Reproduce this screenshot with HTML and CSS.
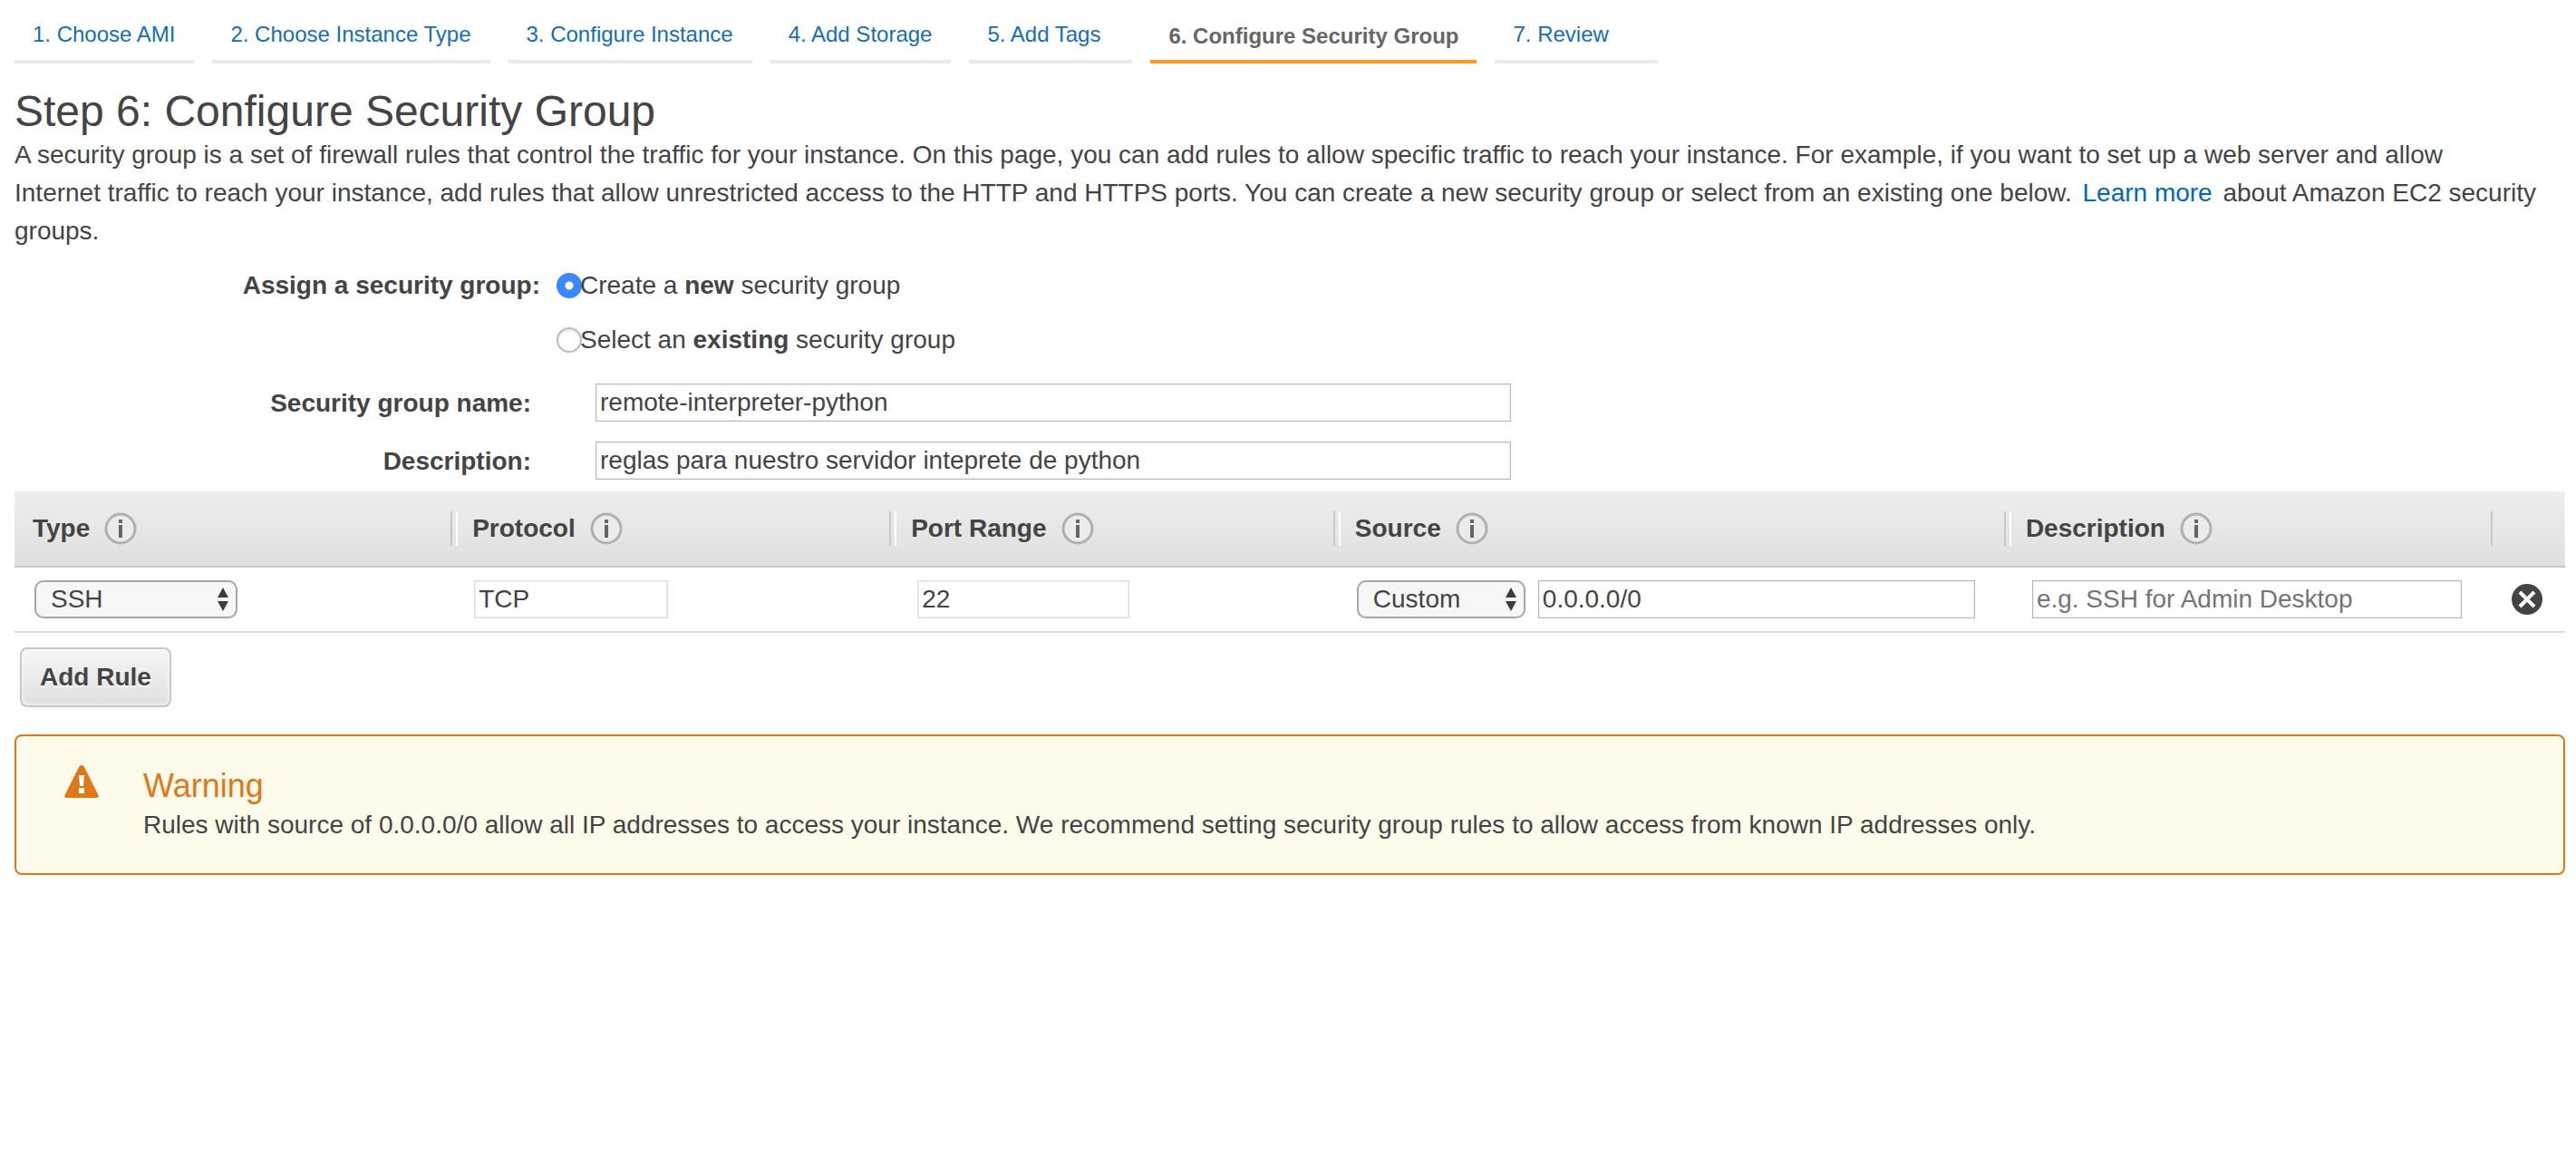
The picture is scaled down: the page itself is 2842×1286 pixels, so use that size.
FILE: index.html
```html
<!DOCTYPE html>
<html lang="en">
<head>
<meta charset="utf-8">
<title>Step 6: Configure Security Group</title>
<link rel="stylesheet" href="styles.css">
</head>
<body>
<svg class="sprite" aria-hidden="true">
  <symbol id="info" viewBox="0 0 36 36">
    <circle cx="18" cy="18" r="16" fill="#ebebeb" stroke="#b0b0b0" stroke-width="3"/>
    <path d="M18 8v4M18 14v14" stroke="#666" stroke-width="4"/>
  </symbol>
  <symbol id="arrows" viewBox="0 0 14 26">
    <path d="M7 0l6 11H1zM7 26l6-11H1z" fill="#3c3c3c"/>
  </symbol>
</svg>
<nav class="steps" aria-label="Wizard steps">
  <a class="step" href="#ami">1. Choose AMI</a>
  <a class="step" href="#type">2. Choose Instance Type</a>
  <a class="step" href="#instance">3. Configure Instance</a>
  <a class="step" href="#storage">4. Add Storage</a>
  <a class="step" href="#tags">5. Add Tags</a>
  <a class="step step-active" href="#security" aria-current="step">6. Configure Security Group</a>
  <a class="step" href="#review">7. Review</a>
</nav>
<main>
  <h1 class="title">Step 6: Configure Security Group</h1>
  <p class="intro">A security group is a set of firewall rules that control the traffic for your instance. On this page, you can add rules to allow specific traffic to reach your instance. For example, if you want to set up a web server and allow<br>Internet traffic to reach your instance, add rules that allow unrestricted access to the HTTP and HTTPS ports. You can create a new security group or select from an existing one below. <a class="learn" href="#learn">Learn more</a> about Amazon EC2 security<br>groups.</p>
  <form class="form">
    <div class="assign" role="radiogroup" aria-labelledby="assign-label">
      <span class="assign-label" id="assign-label">Assign a security group:</span>
      <div class="options">
        <label class="option"><input class="radio" type="radio" name="group" checked><span>Create a <b>new</b> security group</span></label>
        <label class="option"><input class="radio" type="radio" name="group"><span>Select an <b>existing</b> security group</span></label>
      </div>
    </div>
    <div class="field">
      <label class="field-label" for="name">Security group name:</label>
      <input class="text-input field-input" id="name" type="text" value="remote-interpreter-python">
    </div>
    <div class="field">
      <label class="field-label" for="desc">Description:</label>
      <input class="text-input field-input" id="desc" type="text" value="reglas para nuestro servidor inteprete de python">
    </div>
    <table class="rules">
      <colgroup><col class="col-type"><col class="col-protocol"><col class="col-port"><col class="col-source"><col class="col-desc"><col></colgroup>
      <thead>
        <tr>
          <th scope="col"><div class="head">Type <svg class="info"><use href="#info"/></svg></div></th>
          <th scope="col"><div class="head divided">Protocol <svg class="info"><use href="#info"/></svg></div></th>
          <th scope="col"><div class="head divided">Port Range <svg class="info"><use href="#info"/></svg></div></th>
          <th scope="col"><div class="head divided">Source <svg class="info"><use href="#info"/></svg></div></th>
          <th scope="col"><div class="head divided">Description <svg class="info"><use href="#info"/></svg></div></th>
          <td><div class="head divided divided-last"></div></td>
        </tr>
      </thead>
      <tbody>
        <tr>
          <td><div class="cell cell-first"><div class="select-wrap type-select"><select class="select" aria-label="Type"><option>SSH</option></select><svg class="arrows"><use href="#arrows"/></svg></div></div></td>
          <td><div class="cell"><input class="text-input fixed protocol" type="text" aria-label="Protocol" value="TCP" readonly></div></td>
          <td><div class="cell cell-inset"><input class="text-input fixed port" type="text" aria-label="Port range" value="22" readonly></div></td>
          <td><div class="cell"><div class="select-wrap source-select"><select class="select" aria-label="Source"><option>Custom</option></select><svg class="arrows"><use href="#arrows"/></svg></div><input class="text-input grow" type="text" aria-label="Source address" value="0.0.0.0/0"></div></td>
          <td><div class="cell cell-inset"><input class="text-input grow" type="text" aria-label="Rule description" placeholder="e.g. SSH for Admin Desktop"></div></td>
          <td><div class="cell cell-first"><button class="remove" type="button" aria-label="Remove rule"><svg class="remove-icon" viewBox="0 0 36 36"><circle cx="18" cy="18" r="17" fill="#444"/><path d="M10 10l16 16M26 10L10 26" stroke="#fff" stroke-width="4"/></svg></button></div></td>
        </tr>
      </tbody>
    </table>
    <button class="add" type="button">Add Rule</button>
  </form>
  <section class="warning">
    <svg class="warning-icon" viewBox="0 0 38 36"><path d="M19 0q2 0 3 2l15 30q2 4-2 4H3q-4 0-2-4L16 2q1-2 3-2z" fill="#e07719"/><path d="M16 11h6l-1 12h-4zM16 25h6v6h-6z" fill="#fff"/></svg>
    <div>
      <h2 class="warning-title">Warning</h2>
      <p class="warning-text">Rules with source of 0.0.0.0/0 allow all IP addresses to access your instance. We recommend setting security group rules to allow access from known IP addresses only.</p>
    </div>
  </section>
</main>
</body>
</html>
```
FILE: styles.css
```css
* { box-sizing: border-box; }

body {
  margin: 0;
  padding: 0 12px 40px 16px;
  background: #fff;
  color: #444;
  font: 28px/42px "Liberation Sans", Arial, sans-serif;
}

a { text-decoration: none; }
h1, h2, p { margin: 0; font-weight: 400; }
input, select, button { margin: 0; color: inherit; font: inherit; }

.sprite { position: absolute; width: 0; height: 0; }

.steps { display: flex; flex-wrap: wrap; gap: 20px; }
.step {
  min-width: 180px;
  height: 70px;
  padding: 23px 21px 0 20px;
  border-bottom: 4px solid #eaeaea;
  color: #146eb4;
  font-size: 24px;
  line-height: 30px;
}
.step-active {
  padding: 25px 20px 0;
  border-color: #ff9927;
  color: #666;
  font-weight: 700;
}

.title { padding-top: 26px; font-size: 48px; line-height: 54px; }
.learn { margin: 0 4px; color: #0066c0; }

.form { padding-top: 18px; }
.assign { display: flex; gap: 18px; }
.assign-label, .field-label { font-weight: 700; text-align: right; }
.assign-label { width: 580px; }
.options { display: flex; flex-direction: column; gap: 18px; }
.option { display: flex; align-items: center; }
.radio {
  appearance: none;
  width: 28px;
  height: 28px;
  margin-right: -2px;
  border: 2px solid #bbb;
  border-radius: 50%;
  background: #fff;
  box-shadow: inset 0 2px 2px #e4e4e4;
}
.radio:checked {
  border-color: #3b88fd;
  background: radial-gradient(circle, #fff 4px, #3b88fd 5px);
  box-shadow: none;
}

.field { display: flex; gap: 71px; height: 42px; margin-top: 22px; }
.assign + .field { margin-top: 27px; }
.field-label { width: 570px; line-height: 44px; }
.text-input {
  height: 42px;
  padding: 0 4px;
  border: 1px solid #b8b8b8;
  border-radius: 0;
  background: #fff;
  box-shadow: inset 0 0 0 1px #eee;
  line-height: 40px;
}
.text-input::placeholder { color: #757575; opacity: 1; }
.field-input { width: 1010px; }

.rules {
  width: 100%;
  margin-top: 13px;
  border-collapse: collapse;
  table-layout: fixed;
}
.rules th, .rules td { padding: 0; text-align: left; }
.rules thead { background: linear-gradient(#eee, #dfdfdf); }
.rules thead tr { border-bottom: 2px solid #c8c8c8; }
.rules tbody tr { border-bottom: 2px solid #ddd; }
.col-type { width: 17.1%; }
.col-protocol { width: 17.2%; }
.col-port { width: 17.4%; }
.col-source { width: 26.3%; }
.col-desc { width: 19.1%; }

.head { display: flex; align-items: center; gap: 16px; height: 82px; padding-left: 20px; }
.divided { padding-left: 0; }
.divided::before {
  content: "";
  width: 4px;
  height: 38px;
  border-left: 2px solid #c8c8c8;
  border-right: 2px solid #fff;
}
.divided-last::before { border-right: 0; width: 2px; }
.info { width: 36px; height: 36px; }

.cell { display: flex; align-items: center; gap: 14px; height: 70px; padding: 0 32px 0 26px; }
.cell-first { padding-left: 22px; }
.cell-inset { padding-left: 31px; }
.fixed { border-color: #ddd; }
.protocol { width: 214px; }
.port { width: 234px; }
.grow { flex: 1; min-width: 0; }

.select-wrap { display: grid; align-items: center; }
.select-wrap > * { grid-area: 1 / 1; }
.type-select { width: 224px; }
.source-select { width: 186px; }
.select {
  appearance: none;
  width: 100%;
  height: 42px;
  padding: 0 30px 0 16px;
  border: 2px solid #a6a6a6;
  border-radius: 10px;
  background: #f7f7f7;
  line-height: 36px;
}
.arrows { justify-self: end; width: 14px; height: 26px; margin-right: 9px; pointer-events: none; }

.remove { display: flex; padding: 0; border: 0; background: none; }
.remove-icon { width: 36px; height: 36px; }

.add {
  display: block;
  height: 66px;
  margin: 16px 6px 0;
  padding: 0 20px;
  border: 2px solid #c8c8c8;
  border-radius: 8px;
  background: linear-gradient(#f6f6f6, #dfdfdf);
  box-shadow: inset 0 0 4px #fff;
  font-weight: 700;
  text-shadow: 0 2px 0 #fff;
}

.warning {
  display: flex;
  gap: 49px;
  margin-top: 30px;
  padding: 32px 53px;
  border: 2px solid #e07719;
  border-radius: 8px;
  background: #fffbeb;
}
.warning-icon { flex: none; width: 38px; height: 36px; }
.warning-title { color: #e07719; font-size: 36px; line-height: 45px; }
```
